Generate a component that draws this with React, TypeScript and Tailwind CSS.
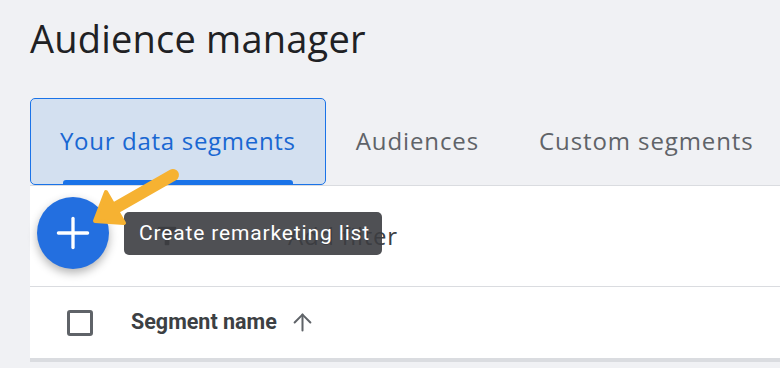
import { Plus, ArrowUp } from 'lucide-react'

export default function App() {
  const tabs = ['Audiences', 'Custom segments']
  return (
    <div className="relative w-[780px] h-[368px] overflow-hidden bg-[#f0f1f4] font-['Open_Sans',sans-serif]">
      <h1 className="pl-[30px] pt-[13px] text-[38px] leading-[50px] text-[#202124] tracking-[0.2px]">Audience manager</h1>

      <div className="flex mt-[35px] ml-[30px] h-[87px] whitespace-nowrap">
        <div className="relative shrink-0 flex items-center px-[29px] pb-[2px] h-[87px] bg-[#d3e0f0] border border-[#1a73e8] rounded-[5px]">
          <span className="text-[24px] text-[#1967d2] tracking-[0.7px]">Your data segments</span>
          <div className="absolute left-[32px] right-[32px] bottom-[0px] h-[4px] bg-[#1a73e8] rounded-t-[3px]" />
        </div>
        {tabs.map(t => (
          <div key={t} className="shrink-0 flex items-center px-[30px] pb-[2px] h-[87px]">
            <span className="text-[24px] text-[#5f6368] tracking-[0.9px]">{t}</span>
          </div>
        ))}
      </div>

      <div className="ml-[30px] bg-white border-t border-[#dadce0] border-b-[4px] border-b-[#dadce0]">
        <div className="flex items-center h-[101px] border-b border-[#dadce0]">
          <svg className="ml-[123px]" width="28" height="28" viewBox="0 0 24 24" fill="#3c4043">
            <path d="M4.25 5.61C6.27 8.2 10 13 10 13v6c0 .55.45 1 1 1h2c.55 0 1-.45 1-1v-6s3.72-4.8 5.74-7.39A.998.998 0 0 0 18.95 4H5.04c-.83 0-1.3.95-.79 1.61z" />
          </svg>
          <span className="ml-[107px] text-[24px] text-[#3c4043] tracking-[0.7px]">Add filter</span>
        </div>
        <div className="flex items-center h-[71px]">
          <div className="ml-[37px] w-[26px] h-[26px] border-[3px] border-[#5f6368] rounded-[3px]" />
          <span className="ml-[38px] text-[21.5px] font-bold text-[#3c4043] font-['Roboto',sans-serif]">Segment name</span>
          <ArrowUp className="ml-[12px] text-[#5f6368]" size={27} strokeWidth={1.8} />
        </div>
      </div>

      <div className="absolute left-[124px] top-[212px] w-[258px] h-[43px] rounded-[5px] bg-[#3c3d41]/[0.9] flex items-center pl-[15px] whitespace-nowrap">
        <span className="text-white text-[21px] font-['Roboto',sans-serif] tracking-[0.85px]">Create remarketing list</span>
      </div>

      <div className="absolute left-[37px] top-[197px] w-[72px] h-[72px] rounded-full bg-[#236fe0] shadow-[0_4px_10px_rgba(0,0,0,0.3)] flex items-center justify-center">
        <Plus className="text-white" size={50} strokeWidth={1.6} />
      </div>

      <svg className="absolute left-0 top-0" width="780" height="368" viewBox="0 0 780 368">
        <line x1="173" y1="175" x2="110" y2="211" stroke="#f6b232" strokeWidth="12" strokeLinecap="round" />
        <path d="M95 221 L106 192 L124 223 Z" fill="#f6b232" stroke="#f6b232" strokeWidth="4" strokeLinejoin="round" />
      </svg>
    </div>
  )
}
